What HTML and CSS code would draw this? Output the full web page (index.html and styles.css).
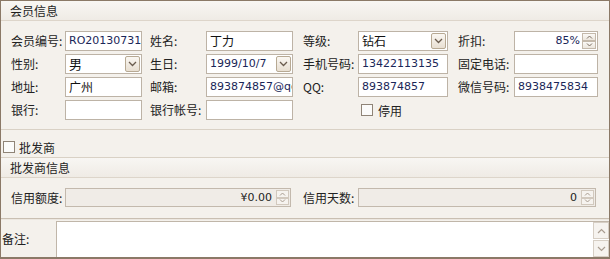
FILE: index.html
```html
<!DOCTYPE html>
<html lang="zh-CN">
<head>
<meta charset="utf-8">
<title>会员信息</title>
<link rel="stylesheet" href="styles.css">
</head>
<body>
<div class="frame">
  <div class="head">会员信息</div>
  <div class="grid">
    <div class="lbl first">会员编号:</div>
    <div class="field">RO20130731</div>
    <div class="lbl g8">姓名:</div>
    <div class="field"><span class="cjk">丁力</span></div>
    <div class="lbl g10">等级:</div>
    <div class="field select"><span class="cjk">钻石</span><span class="dd"><svg width="9" height="6" viewBox="0 0 9 6"><path d="M1 1l3.5 3.5L8 1" fill="none" stroke="#6a5c4e" stroke-width="1.3"/></svg></span></div>
    <div class="lbl g10">折扣:</div>
    <div class="field num">85%<span class="spin"><span class="sb"><svg width="7" height="4" viewBox="0 0 7 4"><path d="M1 3.5l2.5-2.5L6 3.5" fill="none" stroke="#7a6d60" stroke-width="1"/></svg></span><span class="sb"><svg width="7" height="4" viewBox="0 0 7 4"><path d="M1 0.5l2.5 2.5L6 0.5" fill="none" stroke="#7a6d60" stroke-width="1"/></svg></span></span></div>

    <div class="lbl first">性别:</div>
    <div class="field select"><span class="cjk big">男</span><span class="dd"><svg width="9" height="6" viewBox="0 0 9 6"><path d="M1 1l3.5 3.5L8 1" fill="none" stroke="#6a5c4e" stroke-width="1.3"/></svg></span></div>
    <div class="lbl g8">生日:</div>
    <div class="field select">1999/10/7<span class="dd"><svg width="9" height="6" viewBox="0 0 9 6"><path d="M1 1l3.5 3.5L8 1" fill="none" stroke="#6a5c4e" stroke-width="1.3"/></svg></span></div>
    <div class="lbl g10">手机号码:</div>
    <div class="field">13422113135</div>
    <div class="lbl g10">固定电话:</div>
    <div class="field"></div>

    <div class="lbl first">地址:</div>
    <div class="field"><span class="cjk">广州</span></div>
    <div class="lbl g8">邮箱:</div>
    <div class="field">893874857@qq.com</div>
    <div class="lbl g10">QQ:</div>
    <div class="field">893874857</div>
    <div class="lbl g10">微信号码:</div>
    <div class="field">8938475834</div>

    <div class="lbl first">银行:</div>
    <div class="field"></div>
    <div class="lbl g8">银行帐号:</div>
    <div class="field"></div>
    <div class="lbl g10"></div>
    <div class="check-wrap"><span class="box"></span><span class="cl">停用</span></div>
  </div>

  <div class="whole"><span class="box"></span><span class="cl">批发商</span></div>

  <div class="head">批发商信息</div>
  <div class="grid credit">
    <div class="lbl first">信用额度:</div>
    <div class="field dis span3">¥0.00<span class="spin"><span class="sb"><svg width="7" height="4" viewBox="0 0 7 4"><path d="M1 3.5l2.5-2.5L6 3.5" fill="none" stroke="#a89c90" stroke-width="1"/></svg></span><span class="sb"><svg width="7" height="4" viewBox="0 0 7 4"><path d="M1 0.5l2.5 2.5L6 0.5" fill="none" stroke="#a89c90" stroke-width="1"/></svg></span></span></div>
    <div class="lbl g10">信用天数:</div>
    <div class="field dis span3">0<span class="spin"><span class="sb"><svg width="7" height="4" viewBox="0 0 7 4"><path d="M1 3.5l2.5-2.5L6 3.5" fill="none" stroke="#a89c90" stroke-width="1"/></svg></span><span class="sb"><svg width="7" height="4" viewBox="0 0 7 4"><path d="M1 0.5l2.5 2.5L6 0.5" fill="none" stroke="#a89c90" stroke-width="1"/></svg></span></span></div>
  </div>

  <div class="notes">
    <div class="nl">备注:</div>
    <div class="ta">
      <div class="vs">
        <span class="sa"><svg width="9" height="6" viewBox="0 0 9 6"><path d="M1 5l3.5-3.5L8 5" fill="none" stroke="#a99d91" stroke-width="1.2"/></svg></span>
        <span class="sa"><svg width="9" height="6" viewBox="0 0 9 6"><path d="M1 1l3.5 3.5L8 1" fill="none" stroke="#a99d91" stroke-width="1.2"/></svg></span>
      </div>
    </div>
  </div>
</div>
</body>
</html>
```

FILE: styles.css
```css
html, body {
  margin: 0;
  padding: 0;
  background: #f4f1ec;
}

.frame {
  width: 610px;
  height: 259px;
  box-sizing: border-box;
  border: 1px solid #8b7967;
  border-bottom-width: 2px;
  background: #f4f1ec;
  font-family: "Noto Sans CJK SC", "DejaVu Sans", sans-serif;
  font-size: 12px;
  color: #222;
  display: flex;
  flex-direction: column;
  overflow: hidden;
}

.head {
  height: 19px;
  line-height: 19px;
  padding-left: 9px;
  background: linear-gradient(#f8f6f3, #efebe5);
  border-bottom: 1px solid #ddd5ca;
  color: #1e1e1e;
}

.grid {
  display: grid;
  grid-template-columns: 55px 77px 64px 87px 65px 90px 66px 84px;
  grid-auto-rows: 20px;
  row-gap: 3px;
  padding: 10px 0 9px 9px;
  border-bottom: 1px solid #d9d1c5;
}

.lbl {
  line-height: 20px;
  white-space: nowrap;
  font-family: "Noto Sans CJK SC", sans-serif;
}
.lbl.first { padding-left: 1px; }
.lbl.g8 { padding-left: 8px; }
.lbl.g10 { padding-left: 10px; }

.field {
  position: relative;
  box-sizing: border-box;
  height: 20px;
  background: #fff;
  border: 1px solid #bdb3a6;
  font-family: "DejaVu Sans", "Noto Sans CJK SC", sans-serif;
  font-size: 11px;
  line-height: 18px;
  padding-left: 3px;
  color: #1a2658;
  white-space: nowrap;
  overflow: hidden;
}
.cjk {
  font-family: "Noto Sans CJK SC", sans-serif;
  font-size: 12px;
  color: #111;
}
.cjk.big { font-size: 13px; }

.field.select { padding-right: 18px; }

.dd {
  position: absolute;
  right: 1px;
  top: 1px;
  width: 15px;
  height: 16px;
  box-sizing: border-box;
  border: 1px solid #b7a993;
  border-radius: 2px;
  background: linear-gradient(#faf7f2, #e8dfd2);
  display: flex;
  align-items: center;
  justify-content: center;
}

.field.num {
  text-align: right;
  padding-right: 17px;
}

.spin {
  position: absolute;
  right: 1px;
  top: 1px;
  width: 14px;
  height: 16px;
  display: flex;
  flex-direction: column;
}
.sb {
  flex: 1;
  box-sizing: border-box;
  border: 1px solid #c4b9ab;
  background: linear-gradient(#fbf9f6, #ece6dd);
  display: flex;
  align-items: center;
  justify-content: center;
}

.check-wrap {
  display: flex;
  align-items: center;
  gap: 5px;
  padding-left: 3px;
}
.box {
  display: inline-block;
  width: 12px;
  height: 12px;
  box-sizing: border-box;
  border: 1px solid #8f8477;
  background: #fbfbfa;
}
.cl { color: #222; }

.whole {
  height: 30px;
  box-sizing: border-box;
  padding: 7px 0 0 2px;
  display: flex;
  align-items: center;
  gap: 4px;
  border-bottom: 1px solid #d9d1c5;
}

.credit {
  grid-auto-rows: 19px;
  padding: 10px 0 11px 9px;
  border-bottom: 1px solid #c9bfb2;
}
.credit .field { height: 19px; line-height: 17px; }
.field.dis {
  background: #f0ece7;
  border-color: #c3b9ad;
  color: #222;
  text-align: right;
  padding-right: 18px;
}
.field.dis .spin { height: 15px; width: 13px; }
.field.dis .sb { border-color: #d2c9be; background: #f6f3ef; }
.span3 { grid-column: span 3; margin-right: 2px; }

.notes {
  flex: 1;
  display: flex;
  border-top: 1px solid #ece7e0;
  padding-top: 1px;
}
.nl {
  width: 54px;
  padding-left: 1px;
  line-height: 36px;
}
.ta {
  flex: 1;
  position: relative;
  background: #fff;
  border: 1px solid #c0b6a9;
  border-right: none;
  border-bottom: none;
}
.vs {
  position: absolute;
  right: 0;
  top: 0;
  bottom: 0;
  width: 16px;
  display: flex;
  flex-direction: column;
  gap: 1px;
}
.sa {
  flex: 1;
  box-sizing: border-box;
  border: 1px solid #d6cec4;
  background: #f6f3ef;
  display: flex;
  align-items: center;
  justify-content: center;
}
```
